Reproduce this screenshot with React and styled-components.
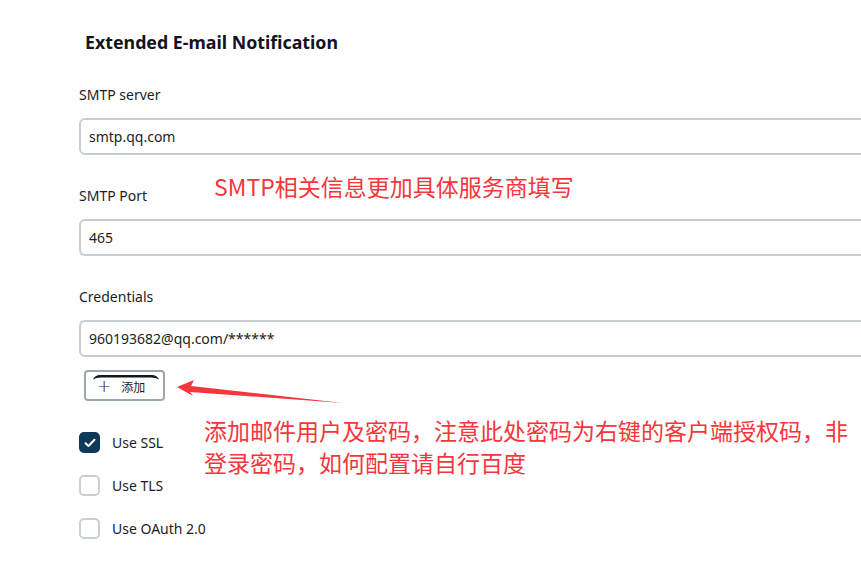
import React from 'react';
import styled, { createGlobalStyle } from 'styled-components';

const GlobalStyle = createGlobalStyle`
  html, body {
    margin: 0;
    padding: 0;
    background: #fff;
    overflow: hidden;
  }
  body {
    font-family: "Noto Sans", "Open Sans", sans-serif;
    color: #14141f;
  }
`;

const Page = styled.div`
  position: relative;
  width: 861px;
  height: 567px;
  overflow: hidden;
`;

const Section = styled.div`
  padding: 30px 0 0 79px;
  display: flex;
  flex-direction: column;
`;

const Title = styled.h2`
  margin: 0 0 31px 6px;
  font-size: 17.8px;
  line-height: 24px;
  font-weight: 700;
  color: #14141f;
`;

const Field = styled.div`
  display: flex;
  flex-direction: column;
  gap: 13px;
  margin-bottom: ${p => p.$last ? '13px' : '31px'};
`;

const Label = styled.label`
  font-size: 14px;
  line-height: 20px;
  color: #1c1c24;
`;

const Input = styled.div`
  box-sizing: border-box;
  width: 820px;
  height: 37px;
  border: 2px solid #c6ced3;
  border-radius: 6px;
  padding: 0 8px;
  display: flex;
  align-items: center;
  font-size: 14px;
  color: #1c1c24;
`;

const AddButton = styled.button`
  position: relative;
  box-sizing: border-box;
  align-self: flex-start;
  margin-left: 5px;
  width: 81px;
  height: 31px;
  border: 2px solid #9ca6ad;
  border-radius: 4px;
  background: #fff;
  display: flex;
  align-items: center;
  padding: 2px 0 0 11px;
  gap: 10px;
  font-family: "Noto Sans CJK SC", sans-serif;
  font-size: 12px;
  color: #1c1c24;
  margin-bottom: 31px;
`;

const Arc = styled.svg`
  position: absolute;
  left: 6px;
  top: 1px;
`;

const Plus = styled.span`
  font-family: "DejaVu Sans", sans-serif;
  font-size: 17px;
  line-height: 1;
  font-weight: 300;
`;

const Checks = styled.div`
  display: flex;
  flex-direction: column;
  gap: 22px;
`;

const CheckRow = styled.div`
  display: flex;
  align-items: center;
  gap: 12px;
  font-size: 14px;
  color: #1c1c24;
`;

const Box = styled.span`
  box-sizing: border-box;
  width: 21px;
  height: 21px;
  border-radius: 5px;
  border: 2px solid ${p => p.$on ? '#0e3a5a' : '#c8d0d5'};
  background: ${p => p.$on ? '#0e3a5a' : '#fff'};
  display: flex;
  align-items: center;
  justify-content: center;
`;

const Note = styled.div`
  position: absolute;
  left: ${p => p.$x}px;
  top: ${p => p.$y}px;
  font-family: "Noto Sans CJK SC", sans-serif;
  font-size: ${p => p.$size}px;
  line-height: ${p => p.$lh || 30}px;
  color: #f5363c;
  white-space: pre;
`;

const Arrow = styled.svg`
  position: absolute;
  left: 170px;
  top: 372px;
`;

function Check({ on, children }) {
  return (
    <CheckRow>
      <Box $on={on}>
        {on && (
          <svg width="12" height="10" viewBox="0 0 12 10">
            <path d="M1.5 5.2 L4.5 8 L10.5 1.8" fill="none" stroke="#fff" strokeWidth="2" strokeLinecap="round" strokeLinejoin="round" />
          </svg>
        )}
      </Box>
      {children}
    </CheckRow>
  );
}

export default function App() {
  return (
    <Page>
      <GlobalStyle />
      <Section>
        <Title>Extended E-mail Notification</Title>
        <Field>
          <Label>SMTP server</Label>
          <Input>smtp.qq.com</Input>
        </Field>
        <Field>
          <Label>SMTP Port</Label>
          <Input>465</Input>
        </Field>
        <Field $last>
          <Label>Credentials</Label>
          <Input>960193682@qq.com/******</Input>
        </Field>
        <AddButton>
          <Arc width="68" height="8" viewBox="0 0 68 8">
            <path d="M1 6.5 Q3 2.2 8 2 L60 2 Q65 2.2 67 6.5 Q64 4.6 59 4.6 L9 4.6 Q4 4.6 1 6.5 Z" fill="#15151c" />
          </Arc>
          <Plus>+</Plus>
          添加
        </AddButton>
        <Checks>
          <Check on>Use SSL</Check>
          <Check>Use TLS</Check>
          <Check>Use OAuth 2.0</Check>
        </Checks>
      </Section>

      <Note $x={214} $y={171} $size={23}>SMTP相关信息更加具体服务商填写</Note>
      <Arrow width="180" height="36" viewBox="0 0 180 36">
        <path d="M7 15 L24 8 L21 14 L173 31 L20 20 L23 24 Z" fill="#f5363c" />
      </Arrow>
      <Note $x={204} $y={414} $size={23} $lh={32}>{'添加邮件用户及密码，注意此处密码为右键的客户端授权码，非\n登录密码，如何配置请自行百度'}</Note>
    </Page>
  );
}
